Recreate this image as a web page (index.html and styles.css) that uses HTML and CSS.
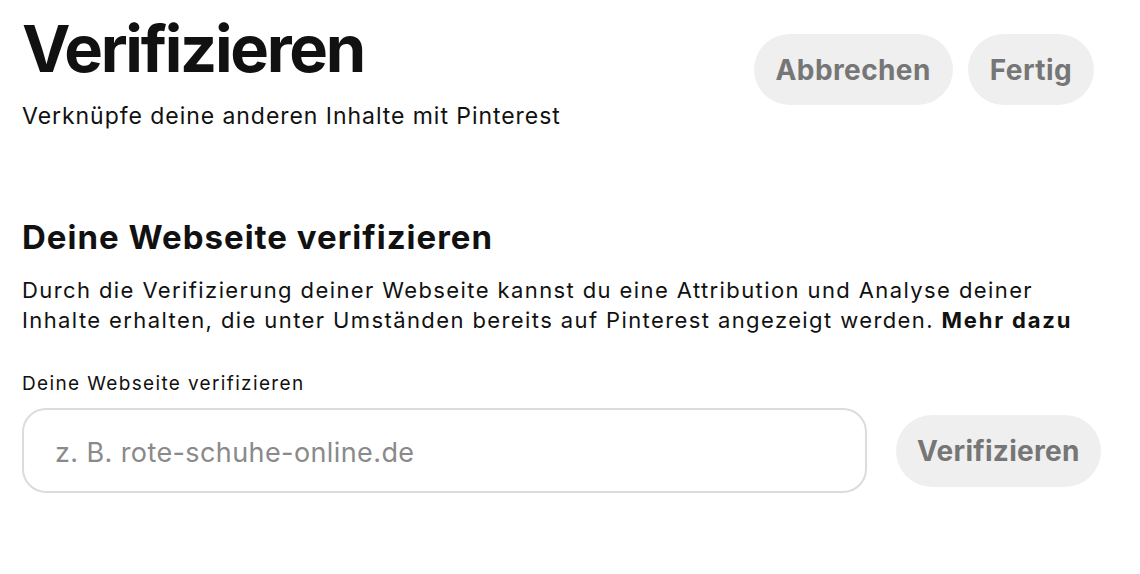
FILE: index.html
```html
<!DOCTYPE html>
<html lang="de">
<head>
<meta charset="utf-8">
<link rel="stylesheet" href="styles.css">
</head>
<body>
<div class="page">
  <header class="header">
    <div class="titles">
      <h1 class="title">Verifizieren</h1>
      <p class="subtitle">Verknüpfe deine anderen Inhalte mit Pinterest</p>
    </div>
    <div class="actions">
      <button class="btn btn-top">Abbrechen</button>
      <button class="btn btn-top">Fertig</button>
    </div>
  </header>
  <section class="section">
    <h2 class="section-title">Deine Webseite verifizieren</h2>
    <p class="desc">Durch die Verifizierung deiner Webseite kannst du eine Attribution und Analyse deiner Inhalte erhalten, die unter Umständen bereits auf Pinterest angezeigt werden. <strong>Mehr dazu</strong></p>
    <label class="label" for="site">Deine Webseite verifizieren</label>
    <div class="row">
      <input class="input" id="site" type="text" placeholder="z. B. rote-schuhe-online.de">
      <button class="btn btn-verify">Verifizieren</button>
    </div>
  </section>
</div>
</body>
</html>
```

FILE: styles.css
```css
* { box-sizing: border-box; }
html, body { margin: 0; padding: 0; background: #fff; }
body {
  font-family: Inter, "Noto Sans", "Liberation Sans", sans-serif;
  color: #111;
}
.page {
  width: 1140px;
  padding: 0 38px 0 22px;
}
.header {
  display: flex;
  justify-content: space-between;
  align-items: flex-start;
  padding-right: 8px;
}
.title {
  margin: 12px 0 0;
  font-size: 65px;
  font-weight: 700;
  line-height: 74px;
  letter-spacing: -2.3px;
}
.subtitle {
  margin: 16px 0 0;
  font-size: 23px;
  line-height: 28px;
  letter-spacing: 0.95px;
}
.actions {
  display: flex;
  gap: 15px;
  margin-top: 34px;
}
.btn {
  font-family: inherit;
  border: none;
  background: #efefef;
  color: #767676;
  font-weight: 700;
  border-radius: 36px;
  cursor: pointer;
  letter-spacing: 0.4px;
}
.btn-top {
  height: 71px;
  padding: 0 22px;
  font-size: 28px;
}
.section {
  margin-top: 87px;
}
.section-title {
  margin: 0;
  font-size: 33px;
  font-weight: 700;
  line-height: 40px;
  letter-spacing: 1px;
}
.desc {
  margin: 18px 0 0;
  font-size: 22px;
  line-height: 30px;
  letter-spacing: 1.4px;
  max-width: 1070px;
}
.desc strong { font-weight: 700; letter-spacing: 1.8px; }
.label {
  display: block;
  margin-top: 37px;
  font-size: 19px;
  line-height: 24px;
  letter-spacing: 1.35px;
}
.row {
  display: flex;
  align-items: center;
  gap: 29px;
  margin-top: 12px;
}
.input {
  flex: 0 0 845px;
  width: 845px;
  height: 85px;
  border: 2px solid #dcdcdc;
  border-radius: 24px;
  padding: 4px 31px 0;
  font-family: inherit;
  font-size: 27px;
  letter-spacing: 0.4px;
  color: #111;
  outline: none;
}
.input::placeholder { color: #8a8a8a; }
.btn-verify {
  flex: 0 0 auto;
  height: 72px;
  padding: 0 21px;
  font-size: 28px;
  letter-spacing: 0.3px;
}
```
